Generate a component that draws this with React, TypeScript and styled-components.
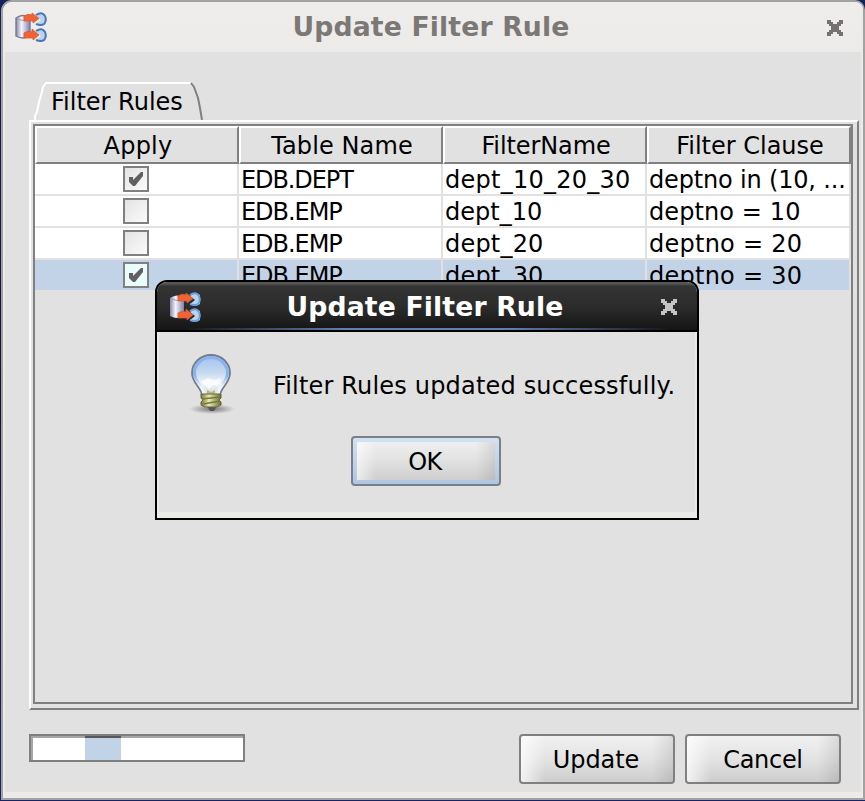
import React from 'react';
import styled, { createGlobalStyle, css } from 'styled-components';

const GlobalStyle = createGlobalStyle`
  * { box-sizing: border-box; }
  html, body, #root { margin: 0; height: 100%; }
  body { overflow: hidden; background: linear-gradient(#13235c, #0c1038 50%, #16246a); }
`;

const font = css`
  font-family: 'DejaVu Sans', sans-serif;
  font-size: 24px;
  line-height: 32px;
  white-space: pre;
  color: #000;
`;

const Label = styled.span<{ $ls?: number; $dx?: number; $dy?: number }>`
  display: inline-block;
  letter-spacing: ${p => p.$ls ?? 0}px;
  transform: translate(${p => p.$dx ?? 0}px, ${p => p.$dy ?? 0}px);
`;

const Title = styled(Label)`
  font-size: 26.67px;
  font-weight: bold;
  letter-spacing: 0.15px;
`;

const Desktop = styled.main`
  ${font}
  width: 865px;
  height: 801px;
  padding: 0 0 1px 1px;
`;

const Window = styled.section`
  width: 864px;
  height: 800px;
  border: 2px solid #a3a2a1;
  border-radius: 11px 10px 0 0;
  background: #edebe9;
  overflow: hidden;
`;

const TitleBar = styled.header`
  height: 50px;
  display: grid;
  grid-template-columns: 56px 1fr 60px;
  align-items: center;
  justify-items: center;
  color: #7b7875;
  background: linear-gradient(#efedeb, #ecebe9);
  & > svg:first-child { margin-top: 2px; }
  & > svg:last-child { margin: 2px 0 0 4px; }
`;

const Content = styled.div`
  width: 856px;
  height: 740px;
  margin: 0 2px;
  padding: 30px 2px 0 24px;
  background: #e1e1e1;
`;

const Tab = styled.div`
  display: grid;
  width: 176px;
  height: 38px;
  margin-left: 5px;
  & > * { grid-area: 1 / 1; }
  & > span { padding: 4px 0 0 17px; }
`;

const TabPane = styled.div`
  width: 830px;
  height: 590px;
  padding: 2px 4px 4px 2px;
  border: 2px solid;
  border-color: #fff #808080 #808080 #fff;
`;

const ScrollPane = styled.div`
  width: 820px;
  height: 580px;
  border: 2px solid #808080;
`;

const Grid = styled.div`
  display: grid;
  grid-template-columns: repeat(4, 204px);
`;

const HeadCell = styled.div`
  height: 38px;
  padding: 2px 0 0 2px;
  border: 2px solid;
  border-color: #fff #808080 #808080 #fff;
  text-align: center;
`;

const Cell = styled.div<{ $selected?: boolean }>`
  height: 32px;
  padding-left: 2px;
  border-right: 2px solid #e1e1e1;
  border-bottom: 2px solid #e1e1e1;
  background: ${p => (p.$selected ? '#c3d3e7' : '#fff')};
  overflow: hidden;
`;

const CheckCell = styled(Cell)`
  display: flex;
  justify-content: center;
  padding: 2px 0 0;
`;

const Box = styled.div<{ $selected?: boolean }>`
  width: 26px;
  height: 26px;
  border: 2px solid #808080;
  background: ${p => (p.$selected ? '#e9fbfb' : 'linear-gradient(135deg, #e3e3e3, #f8f8f8 90%)')};
  & > svg { display: block; }
`;

const Footer = styled.footer`
  display: flex;
  align-items: flex-start;
  padding-top: 24px;
`;

const Progress = styled.div`
  width: 216px;
  height: 28px;
  border: 2px solid #808080;
  padding-left: 54px;
  background: #fff;
  box-shadow: inset 2px 2px #a6a6a6;
`;

const ProgressBlock = styled.div`
  width: 36px;
  height: 24px;
  border-top: 2px solid #57575b;
  background: #c3d3e7;
`;

const Buttons = styled.div`
  display: flex;
  gap: 10px;
  margin-left: 274px;
`;

const Button = styled.button<{ $w?: number; $focus?: boolean }>`
  ${font}
  width: ${p => p.$w ?? 156}px;
  height: 50px;
  padding: 0;
  border: 2px solid #808080;
  border-radius: 4px;
  background:
    linear-gradient(90deg, #fffb, #fff0 16%, #0000 86%, #00000018),
    linear-gradient(#f1f1f1, #e3e3e3 50%, #cdcdcd);
  ${p => p.$focus && css`
    border-color: #7a8087;
    background:
      linear-gradient(90deg, #fff9, #fff0 14%, #0000 86%, #00000018) 4px 4px / 138px 38px no-repeat,
      linear-gradient(#efefef, #e1e1e1 50%, #cecece) 4px 4px / 138px 38px no-repeat,
      linear-gradient(#d3e2f3, #afc5e2);
  `}
`;

const Dialog = styled.section`
  position: absolute;
  left: 155px;
  top: 280px;
  width: 544px;
  height: 240px;
  border: 2px solid #000;
  border-radius: 12px 12px 0 0;
  background: #edebe7;
  overflow: hidden;
`;

const DialogTitle = styled.header`
  height: 50px;
  display: grid;
  grid-template-columns: 56px 1fr 60px;
  align-items: center;
  justify-items: center;
  color: #fff;
  padding-top: 2px;
  border-bottom: 2px solid #000;
  background:
    linear-gradient(90deg, #5f80b000 5%, #5f80b0 35%, #5f80b0 65%, #5f80b000 95%) 0 46px / 100% 2px no-repeat,
    linear-gradient(#555 0 2px, #343434 4px, #2c2c2c 50%, #151515);
  & > svg:first-child { margin-top: 2px; }
  & > svg:last-child { margin-left: 4px; }
`;

const DialogBody = styled.div`
  height: 180px;
  margin: 0 2px;
  background: #e1e1e1;
`;

const Message = styled.div`
  display: flex;
  align-items: flex-start;
  height: 104px;
  padding: 20px 0 0 24px;
  & > span { margin: 18px 0 0 34px; }
`;

const Center = styled.div`
  margin-left: 192px;
`;

function AppIcon({ dark }: { dark?: boolean }) {
  const id = dark ? 'cylDark' : 'cyl';
  return (
    <svg width="32" height="32" viewBox="0 0 32 32">
      <defs>
        <linearGradient id={id}>
          <stop offset="0" stopColor="#8888a6" />
          <stop offset=".4" stopColor="#f4f4fc" />
          <stop offset="1" stopColor="#8080a6" />
        </linearGradient>
      </defs>
      <path d="M1 6Q8 1 15 6V24Q8 28 1 24Z" fill={`url(#${id})`} stroke={dark ? 'none' : '#77779a'} strokeWidth="1.400" />
      <path d="M2 7Q8 10 14 7" fill="none" stroke="#9999b3" />
      <path d="M21 4Q26 -1 31 3V12Q27 15 21 12L26 8ZM21 20Q26 15 31 19V28Q27 31 21 28L26 24Z" fill="#b9d4ef" />
      <path d="M21 3Q27 -1 30 4Q32 9 29 12Q26 14 21 12M21 19Q27 15 30 20Q32 25 29 28Q26 30 21 28" fill="none" stroke={dark ? '#6f9fd8' : '#4a77b3'} strokeWidth="2" />
      <path d="M9 4Q13 1 17 3V1L24 6.500L18 11V9H9ZM9 21Q13 18 17 20V17L24 23L18 28V26H9Z" fill="#ef6432" stroke="#d85c38" strokeWidth=".8" />
    </svg>
  );
}

function CloseIcon({ color }: { color: string }) {
  return (
    <svg width="16" height="16" viewBox="0 0 16 16" shapeRendering="crispEdges">
      <path d="M0 0H4V2H6V4H10V2H12V0H16V4H14V6H12V10H14V12H16V16H12V14H10V12H6V14H4V16H0V12H2V10H4V6H2V4H0Z" fill={color} />
    </svg>
  );
}

function Bulb() {
  return (
    <svg width="56" height="64" viewBox="0 0 56 64">
      <defs>
        <linearGradient id="glass" x2="0" y2="1">
          <stop offset="0" stopColor="#9fc1ee" />
          <stop offset=".45" stopColor="#c6daf0" />
          <stop offset=".7" stopColor="#f2f5f8" />
          <stop offset="1" stopColor="#d6dadd" />
        </linearGradient>
        <linearGradient id="rim" x2="0" y2="1">
          <stop offset="0" stopColor="#8cb2ed" />
          <stop offset=".5" stopColor="#8cb2ed" />
          <stop offset=".8" stopColor="#f1f4f7" />
        </linearGradient>
        <linearGradient id="brass">
          <stop offset="0" stopColor="#77783b" />
          <stop offset=".4" stopColor="#e8e9b2" />
          <stop offset="1" stopColor="#6d6d38" />
        </linearGradient>
        <radialGradient id="shadow"><stop stopColor="#777" /><stop offset="1" stopColor="#7770" /></radialGradient>
      </defs>
      <ellipse cx="29" cy="57" rx="23" ry="5" fill="url(#shadow)" />
      <path d="M24 54H34L31 59H27Z" fill="#55575c" />
      <path d="M19 43C18 35 9 31 9 21A19 18 0 0 1 47 21C47 31 38 35 37 43Z" fill="url(#glass)" stroke="#707b8c" strokeWidth="1.800" />
      <path d="M21 42C20 33 11.500 30 11.500 21A16.500 15.500 0 0 1 44.500 21C44.500 30 36 33 35 42" fill="none" stroke="url(#rim)" strokeWidth="3" />
      <path d="M19 29L25 26L31 28L38 26L35 34L30 33L26 37L20 32Z" fill="#fff" opacity=".7" />
      <path d="M24 42V38L28 40L32 38V42Z" fill="#b7b98b" />
      <path d="M18 42H38V46L36 48L38 50V53L34 55H22L18 53V50L20 48L18 46Z" fill="url(#brass)" stroke="#666638" />
      <path d="M19 47L37 45M20 52L37 49" stroke="#77783e" strokeWidth="1.500" />
    </svg>
  );
}

function Checkmark() {
  return (
    <svg width="22" height="22" viewBox="0 0 22 22">
      <path d="M4 9H8V12L16 4H18V8L10 18H8L4 14Z" fill="#606060" />
    </svg>
  );
}

const columns = [
  { text: 'Apply', ls: 0.2 },
  { text: 'Table Name', ls: 0.1 },
  { text: 'FilterName', ls: -0.1 },
  { text: 'Filter Clause', ls: 0 },
];

const rows = [
  { on: true, table: 'EDB.DEPT', name: 'dept_10_20_30', clause: 'deptno in (10, ...', tl: -1.1, nl: 0.25, cl: -0.17 },
  { on: false, table: 'EDB.EMP', name: 'dept_10', clause: 'deptno = 10', tl: -1.05, nl: 0, cl: 0.1 },
  { on: false, table: 'EDB.EMP', name: 'dept_20', clause: 'deptno = 20', tl: -1.05, nl: 0.2, cl: 0.25 },
  { on: true, table: 'EDB.EMP', name: 'dept_30', clause: 'deptno = 30', tl: -1.05, nl: 0.2, cl: 0.25, selected: true },
];

export default function App() {
  return (
    <>
      <GlobalStyle />
      <Desktop>
        <Window>
          <TitleBar>
            <AppIcon />
            <Title>Update Filter Rule</Title>
            <CloseIcon color="#74716f" />
          </TitleBar>
          <Content>
            <Tab>
              <svg width="176" height="38" viewBox="0 0 176 38">
                <path d="M1 38V34L3 30L5 20L8 10L9 5L12 1H157" fill="none" stroke="#fff" strokeWidth="2" />
                <path d="M157 1L160 5L164 16L166 26L168 38" fill="none" stroke="#808080" strokeWidth="2" />
              </svg>
              <Label>Filter Rules</Label>
            </Tab>
            <TabPane>
              <ScrollPane>
                <Grid>
                  {columns.map(c => (
                    <HeadCell key={c.text}><Label $ls={c.ls}>{c.text}</Label></HeadCell>
                  ))}
                  {rows.map((r, i) => (
                    <React.Fragment key={i}>
                      <CheckCell $selected={r.selected}>
                        <Box $selected={r.selected}>{r.on && <Checkmark />}</Box>
                      </CheckCell>
                      <Cell $selected={r.selected}><Label $ls={r.tl}>{r.table}</Label></Cell>
                      <Cell $selected={r.selected}><Label $ls={r.nl}>{r.name}</Label></Cell>
                      <Cell $selected={r.selected}><Label $ls={r.cl}>{r.clause}</Label></Cell>
                    </React.Fragment>
                  ))}
                </Grid>
              </ScrollPane>
            </TabPane>
            <Footer>
              <Progress><ProgressBlock /></Progress>
              <Buttons>
                <Button><Label $ls={-0.1} $dx={-1} $dy={1}>Update</Label></Button>
                <Button><Label $ls={-0.3} $dy={1}>Cancel</Label></Button>
              </Buttons>
            </Footer>
          </Content>
        </Window>
        <Dialog>
          <DialogTitle>
            <AppIcon dark />
            <Title>Update Filter Rule</Title>
            <CloseIcon color="#c4c4c4" />
          </DialogTitle>
          <DialogBody>
            <Message><Bulb /><Label $ls={0.18}>Filter Rules updated successfully.</Label></Message>
            <Center><Button $w={150} $focus><Label $ls={-0.5} $dx={-1} $dy={1}>OK</Label></Button></Center>
          </DialogBody>
        </Dialog>
      </Desktop>
    </>
  );
}
